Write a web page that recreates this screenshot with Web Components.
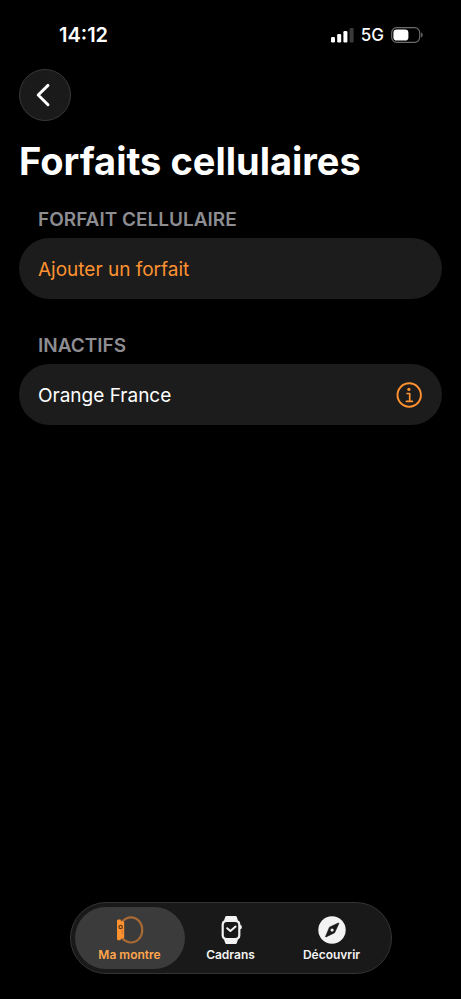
<!DOCTYPE html>
<html lang="fr">
<head>
<meta charset="utf-8">
<meta name="viewport" content="width=device-width, initial-scale=1">
<title>Forfaits cellulaires</title>
<style>
html { background: #000; }
body { margin: 0; background: #000; color: #fff; font-family: Inter, "Liberation Sans", sans-serif; }
</style>
</head>
<body>
<plan-screen></plan-screen>
<script>
const define = (name, html) => {
  const template = document.createElement('template');
  template.innerHTML = html;
  customElements.define(name, class extends HTMLElement {
    constructor() {
      super();
      this.attachShadow({ mode: 'open' }).append(template.content.cloneNode(true));
    }
  });
};

define('status-bar', `
<style>
:host { display: flex; align-items: center; justify-content: space-between; height: 69px; padding: 0 38px 0 59px; box-sizing: border-box; }
time { font-size: 20px; font-weight: 600; line-height: 24px; }
.right { display: flex; align-items: center; gap: 7px; font-size: 17px; font-weight: 500; line-height: 24px; }
svg { display: block; }
</style>
<time>14:12</time>
<div class="right">
  <svg width="23" height="16" viewBox="0 0 23 16" fill="#fff" aria-hidden="true">
    <rect x="0" y="10" width="4" height="5.5" rx="1.2"/><rect x="6.2" y="7" width="4" height="8.5" rx="1.2"/>
    <rect x="12.4" y="4" width="4" height="11.5" rx="1.2"/><rect x="18.6" y="1" width="4" height="14.5" rx="1.2" fill="#3a3a3a"/>
  </svg>
  <span>5G</span>
  <svg width="32" height="16" viewBox="0 0 32 16" aria-hidden="true">
    <rect x=".7" y=".7" width="28" height="14.6" rx="5" fill="none" stroke="#6c6c6c" stroke-width="1.2"/>
    <rect x="2.4" y="2.4" width="15" height="11.2" rx="3.4" fill="#fff"/>
    <path d="M30.2 5.6c1.9.6 1.9 4.2 0 4.8z" fill="#757575"/>
  </svg>
</div>`);

define('back-button', `
<style>
:host { display: block; }
button { display: grid; place-items: center; width: 52px; height: 52px; padding: 0; border: 1px solid #383838; border-radius: 50%; background: #1a1a1a; color: #fff; }
</style>
<button type="button" aria-label="Retour">
  <svg width="50" height="50" viewBox="0 0 50 50" fill="none" stroke="currentColor" stroke-width="2.9" stroke-linecap="round" stroke-linejoin="round" aria-hidden="true"><path d="M28 15.4 18.2 25 28 34.8"/></svg>
</button>`);

define('plan-section', `
<style>
:host { display: block; }
h2 { margin: 0; padding: 0 19px 5px; color: #8d8d92; font-size: 19px; font-weight: 600; line-height: 26px; text-transform: uppercase; }
.card { display: flex; align-items: center; justify-content: space-between; padding: 19px 19px 16px; border-radius: 31px; background: #1c1c1c; font-size: 19px; line-height: 26px; }
</style>
<h2><slot name="label"></slot></h2>
<div class="card"><slot></slot></div>`);

define('plan-action', `
<style>
:host { display: block; }
button { display: block; padding: 0; border: 0; background: none; color: #ff9230; font: inherit; }
</style>
<button type="button"><slot></slot></button>`);

define('info-button', `
<style>
:host { display: block; }
button { display: block; padding: 0; border: 0; background: none; color: #ff9230; }
svg { display: block; overflow: visible; }
</style>
<button type="button" aria-label="Informations">
  <svg width="26" height="26" viewBox="0 0 26 26" fill="none" stroke="currentColor" aria-hidden="true">
    <circle cx="12.2" cy="12" r="11.7" stroke-width="1.9"/>
    <circle cx="11.9" cy="6.4" r="1.6" fill="currentColor" stroke="none"/>
    <path d="M10 10.5h2.7v7.6M9.4 18.3h6" stroke-width="1.7" stroke-linecap="round" stroke-linejoin="round"/>
  </svg>
</button>`);

define('tab-item', `
<style>
:host { display: block; flex: 0 0 110px; color: #f3f3f3; }
:host(:not(:first-child)) { margin-left: -9px; }
:host([selected]) button { background: #3b3b3b; color: #ffa64d; }
button { display: flex; flex-direction: column; align-items: center; gap: 2px; width: 100%; height: 62px; padding: 8px 0 0; border: 0; border-radius: 31px; background: none; color: inherit; font: inherit; font-size: 12px; font-weight: 600; line-height: 16px; }
</style>
<button type="button" role="tab"><slot name="icon"></slot><span><slot></slot></span></button>`);

define('tab-bar', `
<style>
:host { display: flex; padding: 4px; border: 1px solid #343434; border-radius: 36px; background: #191919; }
</style>
<slot></slot>`);

define('plan-screen', `
<style>
:host { display: flex; flex-direction: column; min-height: 100vh; }
main { padding: 0 19px; }
h1 { margin: 16px 0 22px; font-size: 38px; font-weight: 700; line-height: 48px; }
plan-section + plan-section { margin-top: 34px; }
footer { display: flex; justify-content: center; margin-top: auto; padding: 25px 0; }
svg { display: block; }
</style>
<status-bar></status-bar>
<main>
  <back-button></back-button>
  <h1>Forfaits cellulaires</h1>
  <plan-section><span slot="label">Forfait cellulaire</span><plan-action>Ajouter un forfait</plan-action></plan-section>
  <plan-section><span slot="label">Inactifs</span><span>Orange France</span><info-button></info-button></plan-section>
</main>
<footer>
  <tab-bar role="tablist">
    <tab-item selected>
      <svg slot="icon" width="30" height="30" viewBox="0 0 30 30" aria-hidden="true">
        <path d="M7 6.7C9.500 4 12.500 2.300 15.800 2.300C22.300 2.300 27.200 7.800 27.200 14.900S22.300 27.500 15.800 27.500C12.500 27.500 9.500 25.800 7 23.100" fill="none" stroke="#a96a34" stroke-width="2.200"/>
        <path d="M2.900 4.600H5.600L6 6.200H8.300L9.200 7.200V22.400L8.300 23.500H6L5.500 25.200H2.900L2 24.200V5.600Z" fill="#ff9230"/>
        <circle cx="5.700" cy="12" r="1.700" fill="#ff9230" stroke="#633b18" stroke-width="1.200"/>
        <path d="M7.300 14.900v4.200" stroke="#b86d2b" stroke-width=".8"/>
      </svg>Ma montre
    </tab-item>
    <tab-item>
      <svg slot="icon" width="30" height="30" viewBox="0 0 30 30" aria-hidden="true">
        <path d="M10.3 1h9.4q.8 0 1.1.9l1.1 3.3q2.5 1.1 2.5 4.1v.6q1.4.2 1.4 1.6v1.3q0 1.3-1.4 1.5v6.4q0 3-2.5 4.1l-1.1 3.3q-.3.900-1.1.900h-9.4q-.8 0-1.1-.9l-1.1-3.3q-2.5-1.1-2.5-4.1V9.300q0-3 2.500-4.100l1.100-3.300q.3-.9 1.100-.9z" fill="#f3f3f3"/>
        <rect x="7.800" y="6.900" width="14.400" height="16.200" rx="3" fill="#191919"/>
        <path d="m11.200 13.200 3.200 2.900 5.200-4.500" fill="none" stroke="#f3f3f3" stroke-width="2" stroke-linecap="round" stroke-linejoin="round"/>
      </svg>Cadrans
    </tab-item>
    <tab-item>
      <svg slot="icon" width="30" height="30" viewBox="0 0 30 30" aria-hidden="true">
        <circle cx="15" cy="15" r="13.700" fill="#f3f3f3"/>
        <path d="M21.300 8.100 12.500 12.200 8.600 21.500q-.2.600.4.400L17.600 17.700 21.800 8.600q.2-.7-.5-.5z" fill="#191919" stroke="#191919" stroke-width=".7" stroke-linejoin="round"/>
        <circle cx="15.100" cy="15" r="1.600" fill="#f3f3f3"/>
      </svg>Découvrir
    </tab-item>
  </tab-bar>
</footer>`);
</script>
</body>
</html>
